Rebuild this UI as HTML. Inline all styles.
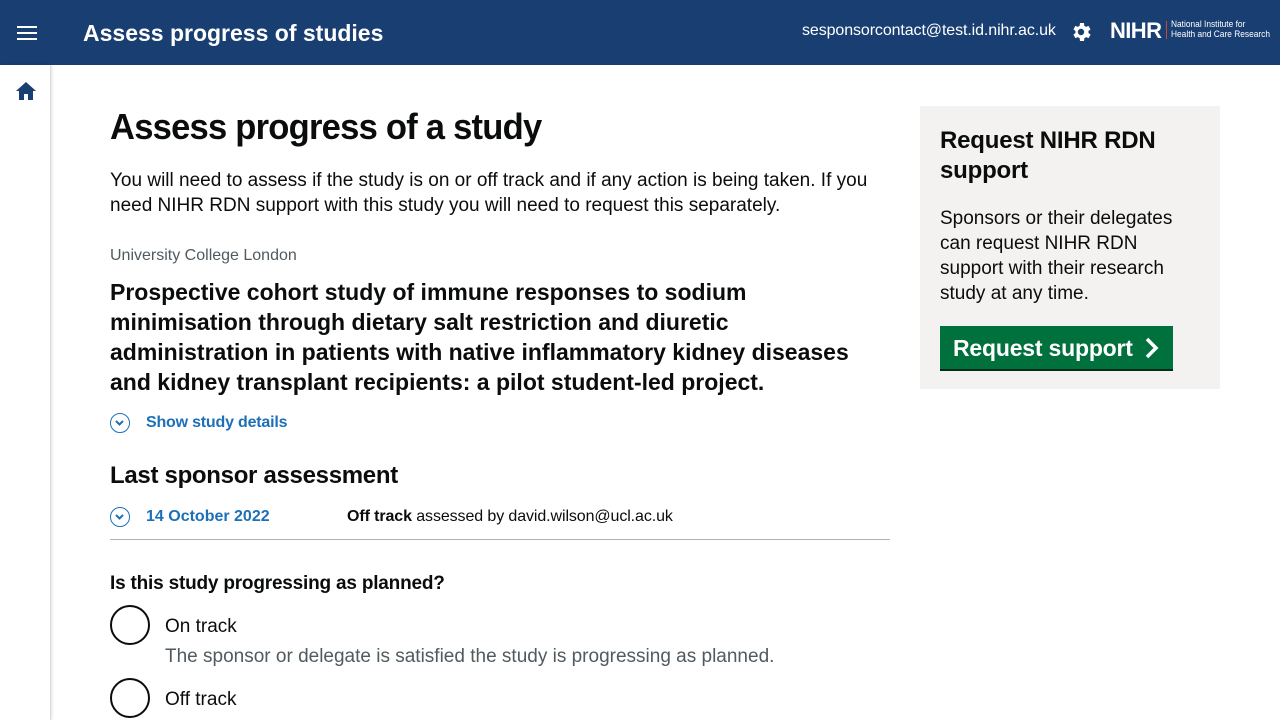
<!DOCTYPE html>
<html><head><meta charset="utf-8"><style>
*{box-sizing:border-box;margin:0;padding:0}
body{width:1280px;height:720px;overflow:hidden;background:#fff;font-family:"Liberation Sans",sans-serif;color:#0b0c0c;position:relative}
.hdr{position:absolute;left:0;top:0;width:1280px;height:65px;background:#193e72}
.side{position:absolute;left:0;top:65px;width:51px;height:655px;border-right:1px solid #ddd;box-shadow:1px 0 3px rgba(0,0,0,.12)}
.a{position:absolute;white-space:nowrap}
.chev{position:absolute;width:20px;height:20px;border:1.5px solid #1d70b8;border-radius:50%}
.radio{position:absolute;width:40px;height:40px;border:2px solid #0b0c0c;border-radius:50%;left:110px}
</style></head><body>
<div class="hdr">
<svg class="a" style="left:17px;top:25px" width="20" height="16"><rect y="1" width="20" height="2" fill="#fff"/><rect y="7" width="20" height="2" fill="#fff"/><rect y="13" width="20" height="2" fill="#fff"/></svg>
<div class="a" style="left:83px;top:20px;font-size:23px;font-weight:bold;color:#fff">Assess progress of studies</div>
<div class="a" style="left:802px;top:22px;font-size:16px;color:#fff;letter-spacing:-0.1px">sesponsorcontact@test.id.nihr.ac.uk</div>
<svg class="a" style="left:1069px;top:20px" width="24" height="24" viewBox="0 0 24 24"><path fill="#fff" d="M19.4 13a7.5 7.5 0 000-2l2.1-1.6-2-3.5-2.5 1a7 7 0 00-1.7-1L15 3h-4l-.4 2.9a7 7 0 00-1.7 1l-2.5-1-2 3.5L6.5 11a7.5 7.5 0 000 2l-2.1 1.6 2 3.5 2.5-1a7 7 0 001.7 1L11 21h4l.4-2.9a7 7 0 001.7-1l2.5 1 2-3.5zM12 15.2a3.2 3.2 0 110-6.4 3.2 3.2 0 010 6.4z"/></svg>
<div class="a" style="left:1110px;top:18px;font-size:22px;font-weight:bold;color:#fff;letter-spacing:-0.6px">NIHR</div>
<div class="a" style="left:1166px;top:21px;width:1px;height:18px;background:#c8443c"></div>
<div class="a" style="left:1171px;top:20px;font-size:9.5px;line-height:10px;color:#fff;transform:scaleX(0.88);transform-origin:left">National Institute for<br>Health and Care Research</div>
</div>
<div class="side"><svg class="a" style="left:15px;top:16px" width="22" height="20" viewBox="0 0 22 20"><path fill="#193e72" d="M11 1L1 10h3v9h5v-6h4v6h5v-9h3z"/></svg></div>

<div class="a" style="left:110px;top:106px;font-size:36px;font-weight:bold;letter-spacing:-0.8px;transform:scaleX(0.96);transform-origin:left">Assess progress of a study</div>
<div class="a" style="left:110px;top:168px;font-size:19px;line-height:25px">You will need to assess if the study is on or off track and if any action is being taken. If you<br>need NIHR RDN support with this study you will need to request this separately.</div>
<div class="a" style="left:110px;top:247px;font-size:16px;color:#505a5f">University College London</div>
<div class="a" style="left:110px;top:277px;font-size:23px;line-height:30px;font-weight:bold">Prospective cohort study of immune responses to sodium<br>minimisation through dietary salt restriction and diuretic<br>administration in patients with native inflammatory kidney diseases<br>and kidney transplant recipients: a pilot student-led project.</div>
<div class="chev" style="left:110px;top:413px"><svg width="17" height="17" viewBox="0 0 17 17"><path d="M5 7l3.5 3.5L12 7" stroke="#1d70b8" stroke-width="2" fill="none"/></svg></div>
<div class="a" style="left:146px;top:414px;font-size:16px;font-weight:bold;color:#1d70b8;letter-spacing:-0.2px">Show study details</div>
<div class="a" style="left:110px;top:462px;font-size:24px;font-weight:bold;letter-spacing:-0.3px">Last sponsor assessment</div>
<div class="chev" style="left:110px;top:507px"><svg width="17" height="17" viewBox="0 0 17 17"><path d="M5 7l3.5 3.5L12 7" stroke="#1d70b8" stroke-width="2" fill="none"/></svg></div>
<div class="a" style="left:146px;top:508px;font-size:16px;font-weight:bold;color:#1d70b8">14 October 2022</div>
<div class="a" style="left:347px;top:508px;font-size:16px;letter-spacing:-0.1px"><b>Off track</b> assessed by david.wilson@ucl.ac.uk</div>
<div class="a" style="left:110px;top:539px;width:780px;height:1px;background:#b1b4b6"></div>
<div class="a" style="left:110px;top:573px;font-size:19px;font-weight:bold;letter-spacing:-0.2px">Is this study progressing as planned?</div>
<div class="radio" style="top:605px"></div>
<div class="a" style="left:165px;top:616px;font-size:19px">On track</div>
<div class="a" style="left:165px;top:646px;font-size:19px;color:#505a5f">The sponsor or delegate is satisfied the study is progressing as planned.</div>
<div class="radio" style="top:678px"></div>
<div class="a" style="left:165px;top:689px;font-size:19px">Off track</div>

<div class="a" style="left:920px;top:106px;width:300px;height:283px;background:#f3f2f1"></div>
<div class="a" style="left:940px;top:126px;font-size:24px;line-height:30px;font-weight:bold;letter-spacing:-0.2px">Request NIHR RDN<br>support</div>
<div class="a" style="left:940px;top:206px;font-size:19px;line-height:25px">Sponsors or their delegates<br>can request NIHR RDN<br>support with their research<br>study at any time.</div>
<div class="a" style="left:940px;top:326px;width:233px;height:43px;background:#00703c;box-shadow:0 2px 0 #002d18"></div>
<div class="a" style="left:953px;top:335px;font-size:23px;font-weight:bold;color:#fff;letter-spacing:-0.2px">Request support</div>
<svg class="a" style="left:1143px;top:337px" width="18" height="22" viewBox="0 0 18 22"><path d="M4 2l9 9-9 9" stroke="#fff" stroke-width="3.5" fill="none"/></svg>
</body></html>
